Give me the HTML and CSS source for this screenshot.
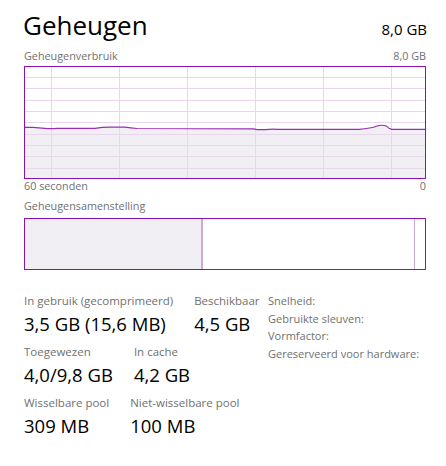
FILE: index.html
```html
<!DOCTYPE html>
<html lang="nl">
<head>
<meta charset="utf-8">
<title>Geheugen</title>
<link rel="stylesheet" href="styles.css">
</head>
<body>
<div class="panel">
  <div class="header">
    <div class="title">Geheugen</div>
    <div class="total">8,0 GB</div>
  </div>
  <div class="caption top-caption"><span>Geheugenverbruik</span><span>8,0 GB</span></div>
  <div class="graph">
    <svg class="graph-svg" viewBox="0 0 400 111" width="400" height="111">
      <path class="area" d="M0 60.3 L8 60.3 Q14 60.8 20 61.3 Q26 62 32 61.3 L70 61.3 Q78 60 88 60.2 L100 60.2 Q106 61 112 61.5 L228 61.8 Q234 63 240 62.6 Q246 62 252 62.3 L334 62.3 Q346 61.5 352 59 Q358 57.3 362 59.5 Q364 62 367 62.3 L400 62.3 L400 111 L0 111 Z"/>
      <g class="grid">
        <line x1="26.5" y1="0" x2="26.5" y2="111"/>
        <line x1="94.5" y1="0" x2="94.5" y2="111"/>
        <line x1="162.5" y1="0" x2="162.5" y2="111"/>
        <line x1="230.5" y1="0" x2="230.5" y2="111"/>
        <line x1="298.5" y1="0" x2="298.5" y2="111"/>
        <line x1="366.5" y1="0" x2="366.5" y2="111"/>
        <line x1="0" y1="10.5" x2="400" y2="10.5"/>
        <line x1="0" y1="21.5" x2="400" y2="21.5"/>
        <line x1="0" y1="33.5" x2="400" y2="33.5"/>
        <line x1="0" y1="44.5" x2="400" y2="44.5"/>
        <line x1="0" y1="55.5" x2="400" y2="55.5"/>
        <line x1="0" y1="67.5" x2="400" y2="67.5"/>
        <line x1="0" y1="78.5" x2="400" y2="78.5"/>
        <line x1="0" y1="89.5" x2="400" y2="89.5"/>
        <line x1="0" y1="101.5" x2="400" y2="101.5"/>
      </g>
      <path class="usage" d="M0 60.3 L8 60.3 Q14 60.8 20 61.3 Q26 62 32 61.3 L70 61.3 Q78 60 88 60.2 L100 60.2 Q106 61 112 61.5 L228 61.8 Q234 63 240 62.6 Q246 62 252 62.3 L334 62.3 Q346 61.5 352 59 Q358 57.3 362 59.5 Q364 62 367 62.3 L400 62.3"/>
    </svg>
  </div>
  <div class="caption bottom-caption"><span>60 seconden</span><span>0</span></div>
  <div class="caption section-caption">Geheugensamenstelling</div>
  <div class="composition">
    <div class="seg in-use"></div>
    <div class="seg modified"></div>
    <div class="seg standby"></div>
    <div class="seg divider"></div>
    <div class="seg free"></div>
  </div>
  <div class="details">
    <div class="stats">
      <div class="stat-row">
        <div class="stat"><div class="label">In gebruik (gecomprimeerd)</div><div class="value">3,5 GB (15,6 MB)</div></div>
        <div class="stat"><div class="label">Beschikbaar</div><div class="value">4,5 GB</div></div>
      </div>
      <div class="stat-row">
        <div class="stat"><div class="label">Toegewezen</div><div class="value">4,0/9,8 GB</div></div>
        <div class="stat"><div class="label">In cache</div><div class="value">4,2 GB</div></div>
      </div>
      <div class="stat-row">
        <div class="stat"><div class="label">Wisselbare pool</div><div class="value">309 MB</div></div>
        <div class="stat"><div class="label">Niet-wisselbare pool</div><div class="value">100 MB</div></div>
      </div>
    </div>
    <div class="props">
      <div class="prop">Snelheid:</div>
      <div class="prop">Gebruikte sleuven:</div>
      <div class="prop">Vormfactor:</div>
      <div class="prop">Gereserveerd voor hardware:</div>
    </div>
  </div>
</div>
</body>
</html>
```

FILE: styles.css
```css
* { box-sizing: border-box; }
html, body { margin: 0; padding: 0; background: #fff; }
body {
  font-family: "Open Sans", "Noto Sans", "Liberation Sans", sans-serif;
  color: #000;
  width: 446px;
  height: 466px;
  overflow: hidden;
}
.panel {
  padding: 0 20px 0 24px;
  width: 446px;
}
.header {
  display: flex;
  justify-content: space-between;
  align-items: flex-start;
  height: 43px;
  padding-top: 7px;
}
.title {
  font-size: 26px;
  line-height: 36px;
  font-weight: 400;
  margin-left: -1px;
}
.total {
  font-size: 15px;
  line-height: 20px;
  padding-top: 12px;
  margin-right: -1px;
}
.caption {
  display: flex;
  justify-content: space-between;
  font-size: 10.8px;
  color: #707070;
  line-height: 14px;
}
.top-caption { margin-top: 6px; }
.graph {
  width: 402px;
  height: 113px;
  border: 1px solid #8b12ae;
  margin-top: 3px;
  background: #fff;
}
.graph-svg { display: block; }
.area { fill: #f1eff3; }
.grid line { stroke: #e7d6ec; stroke-width: 1; }
.usage { fill: none; stroke: #9a2db8; stroke-width: 1.2; }
.bottom-caption { margin-top: 0; }
.section-caption { margin-top: 6px; }
.composition {
  width: 402px;
  height: 52px;
  margin-top: 5px;
  border: 1px solid #8b12ae;
  display: flex;
}
.seg { height: 100%; }
.in-use { width: 176px; background: #f1eff3; }
.modified { width: 2px; background: #cda8da; }
.standby { flex: 1; background: #fff; }
.divider { width: 1px; background: #cda8da; }
.free { width: 10px; background: #fff; }
.details {
  display: flex;
  margin-top: 22px;
}
.stats { width: 244px; }
.stat-row {
  display: flex;
  gap: 21px;
  margin-bottom: 6px;
}
.label {
  font-size: 11.5px;
  line-height: 18px;
  color: #707070;
  white-space: nowrap;
}
.value {
  font-size: 18.5px;
  line-height: 26px;
  padding-top: 1px;
  white-space: nowrap;
}
.prop {
  font-size: 11px;
  line-height: 17.7px;
  color: #707070;
  white-space: nowrap;
}
```
